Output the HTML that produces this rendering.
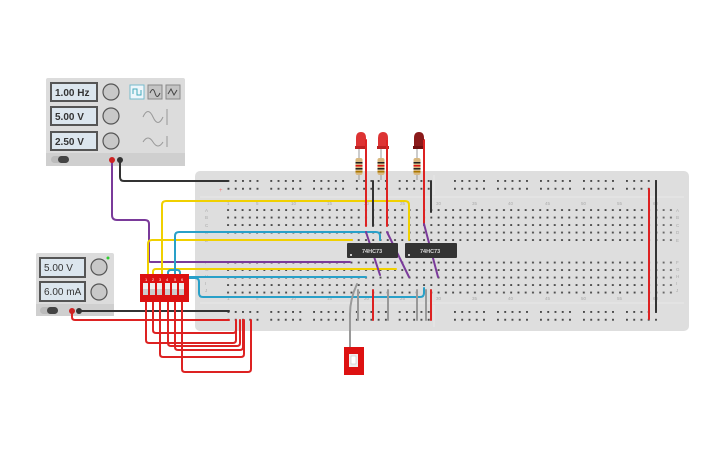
<!DOCTYPE html>
<html><head><meta charset="utf-8"><style>
html,body{margin:0;padding:0;background:#fff;width:725px;height:453px;overflow:hidden}
svg{display:block}
text{font-family:"Liberation Sans",sans-serif}
</style></head><body>
<svg width="725" height="453" viewBox="0 0 725 453" xmlns="http://www.w3.org/2000/svg">
<defs>
<pattern id="hp" x="226.5" y="208.5" width="7.26" height="7.5" patternUnits="userSpaceOnUse"><rect x="0.6" y="0.6" width="1.9" height="1.9" fill="#4a4a4a"/></pattern>
<g id="grp" fill="#4a4a4a"><rect x="0" y="0" width="1.9" height="1.9"/><rect x="7.26" y="0" width="1.9" height="1.9"/><rect x="14.52" y="0" width="1.9" height="1.9"/><rect x="21.78" y="0" width="1.9" height="1.9"/><rect x="29.04" y="0" width="1.9" height="1.9"/>
<rect x="0" y="7.8" width="1.9" height="1.9"/><rect x="7.26" y="7.8" width="1.9" height="1.9"/><rect x="14.52" y="7.8" width="1.9" height="1.9"/><rect x="21.78" y="7.8" width="1.9" height="1.9"/><rect x="29.04" y="7.8" width="1.9" height="1.9"/></g>
</defs>

<!-- breadboard -->
<rect x="195" y="171" width="494" height="160" rx="5" fill="#dedede"/>
<line x1="200" y1="197" x2="684" y2="197" stroke="#e8e8e8"/>
<line x1="200" y1="303" x2="684" y2="303" stroke="#e8e8e8"/>
<line x1="434" y1="175" x2="434" y2="195" stroke="#e8e8e8"/>
<line x1="434" y1="305" x2="434" y2="327" stroke="#e8e8e8"/>
<use href="#grp" x="227.5" y="180"/><use href="#grp" x="270.3" y="180"/><use href="#grp" x="313.1" y="180"/><use href="#grp" x="355.9" y="180"/><use href="#grp" x="398.7" y="180"/>
<use href="#grp" x="454" y="180"/><use href="#grp" x="497" y="180"/><use href="#grp" x="540" y="180"/><use href="#grp" x="583" y="180"/><use href="#grp" x="626" y="180"/>
<use href="#grp" x="227.5" y="311"/><use href="#grp" x="270.3" y="311"/><use href="#grp" x="313.1" y="311"/><use href="#grp" x="355.9" y="311"/><use href="#grp" x="398.7" y="311"/>
<use href="#grp" x="454" y="311"/><use href="#grp" x="497" y="311"/><use href="#grp" x="540" y="311"/><use href="#grp" x="583" y="311"/><use href="#grp" x="626" y="311"/>
<rect x="226" y="208" width="433" height="37" fill="url(#hp)"/>
<rect x="226" y="260" width="433" height="37" fill="url(#hp)"/>
<rect x="662" y="208" width="12" height="37" fill="url(#hp)" opacity="0.8"/>
<rect x="662" y="260" width="12" height="37" fill="url(#hp)" opacity="0.8"/>
<g font-size="4.5" fill="#aaa">
<text x="227" y="205">1</text><text x="256" y="205">5</text><text x="291" y="205">10</text><text x="327" y="205">15</text><text x="364" y="205">20</text><text x="400" y="205">25</text><text x="436" y="205">30</text><text x="472" y="205">35</text><text x="508" y="205">40</text><text x="545" y="205">45</text><text x="581" y="205">50</text><text x="617" y="205">55</text><text x="653" y="205">60</text>
<text x="227" y="300">1</text><text x="256" y="300">5</text><text x="291" y="300">10</text><text x="327" y="300">15</text><text x="364" y="300">20</text><text x="400" y="300">25</text><text x="436" y="300">30</text><text x="472" y="300">35</text><text x="508" y="300">40</text><text x="545" y="300">45</text><text x="581" y="300">50</text><text x="617" y="300">55</text><text x="653" y="300">60</text>
<text x="205" y="212">A</text><text x="205" y="219">B</text><text x="205" y="227">C</text><text x="205" y="234">D</text><text x="205" y="242">E</text>
<text x="205" y="264">F</text><text x="205" y="271">G</text><text x="205" y="278">H</text><text x="205" y="285">I</text><text x="205" y="292">J</text>
<text x="676" y="212">A</text><text x="676" y="219">B</text><text x="676" y="227">C</text><text x="676" y="234">D</text><text x="676" y="242">E</text>
<text x="676" y="264">F</text><text x="676" y="271">G</text><text x="676" y="278">H</text><text x="676" y="285">I</text><text x="676" y="292">J</text>
</g>
<text x="219" y="192" font-size="6" fill="#f08080">+</text>

<!-- function generator -->
<rect x="46" y="78" width="139" height="88" rx="2" fill="#dcdcdc"/>
<rect x="46" y="153" width="139" height="13" fill="#cfcfcf"/>
<g fill="#dce6ee" stroke="#555" stroke-width="2">
<rect x="51" y="83" width="46" height="18"/><rect x="51" y="107" width="46" height="18"/><rect x="51" y="132" width="46" height="18"/></g>
<g font-size="10" font-weight="bold" fill="#333"><text x="55" y="96">1.00 Hz</text><text x="55" y="120">5.00 V</text><text x="55" y="145">2.50 V</text></g>
<g fill="#c8c8c8" stroke="#555" stroke-width="1.2"><circle cx="111" cy="92" r="8"/><circle cx="111" cy="116" r="8"/><circle cx="111" cy="141" r="8"/></g>
<rect x="130" y="85" width="14" height="14" fill="#eef6fb" stroke="#7bc" stroke-width="1"/>
<rect x="148" y="85" width="14" height="14" fill="#c4c4c4" stroke="#888"/>
<rect x="166" y="85" width="14" height="14" fill="#c4c4c4" stroke="#888"/>
<path d="M133 94v-5h4v6h4v-5" stroke="#4ab" fill="none"/>
<path d="M150 93q3-7 5 0t5 0" stroke="#444" fill="none"/>
<path d="M168 94l3-5 3 6 3-5" stroke="#444" fill="none"/>
<path d="M143 117q5-11 10 0t10 0M167 109v16" stroke="#999" fill="none"/>
<path d="M143 142q5-8 10 0t10 0M167 136v11" stroke="#999" fill="none"/>
<rect x="51" y="156" width="18" height="7" rx="3.5" fill="#bbb"/><rect x="58" y="156" width="11" height="7" rx="3.5" fill="#444"/>

<!-- power supply -->
<rect x="36" y="253" width="78" height="63" rx="2" fill="#dcdcdc"/>
<rect x="36" y="304" width="78" height="12" fill="#cfcfcf"/>
<g fill="#dce6ee" stroke="#555" stroke-width="2"><rect x="40" y="258" width="45" height="19"/><rect x="40" y="282" width="45" height="19"/></g>
<g font-size="10" fill="#333"><text x="44" y="271">5.00 V</text><text x="44" y="295">6.00 mA</text></g>
<g fill="#c8c8c8" stroke="#555" stroke-width="1.2"><circle cx="99" cy="267" r="8"/><circle cx="99" cy="292" r="8"/></g>
<circle cx="108" cy="258" r="1.5" fill="#3c3"/>
<rect x="40" y="307" width="18" height="7" rx="3.5" fill="#bbb"/><rect x="47" y="307" width="11" height="7" rx="3.5" fill="#444"/>

<!-- wires -->
<g fill="none" stroke-width="2" stroke-linejoin="round" stroke-linecap="round">
<path d="M120 160v17q0 4 4 4h104" stroke="#333"/>
<path d="M112 160v55q0 5 5 5h28q4 0 4 4v37q0 1 2 1h199" stroke="#7a3a9a"/>
<path d="M79 311h150" stroke="#333"/>
<path d="M72 311v6q0 3 3 3h154" stroke="#d22"/>
<path d="M162 275v-70q0-4 4-4h239q4 0 4 4v35" stroke="#f0d000"/>
<path d="M148 275v-31q0-4 4-4h200" stroke="#f0d000"/>
<path d="M153 275v-3q0-3 3-3h240" stroke="#f0d000"/>
<path d="M175 275v-39q0-4 4-4h197q4 0 4 4v4" stroke="#29a0c8"/>
<path d="M168 275v-2q0-3 3-3h6q3 0 3 3v4h186" stroke="#29a0c8"/>
<path d="M187 278h8q4 0 4 4v11q0 4 4 4h217q4 0 4-4v-5" stroke="#29a0c8"/>
<path d="M146 300v40q0 3 3 3h84q3 0 3-3v-20" stroke="#d22"/>
<path d="M153 300v30q0 3 3 3h77q3 0 3-3" stroke="#d22"/>
<path d="M160 300v54q0 3 3 3h78q3 0 3-3v-34" stroke="#d22"/>
<path d="M168 300v43q0 3 3 3h66q3 0 3-3v-23" stroke="#d22"/>
<path d="M175 300v47q0 3 3 3h62q3 0 3-3v-27" stroke="#d22"/>
<path d="M182 300v69q0 3 3 3h63q3 0 3-3v-49" stroke="#d22"/>
<path d="M366 140v86M387 140v86M424 140v84" stroke="#d22"/>
<path d="M373 181v45M431 181v31" stroke="#333"/>
<path d="M366 232l14 43M387 232l22 45M424 224l14 53" stroke="#7a3a9a"/>
<path d="M357 284q-7 15-7 30v40" stroke="#999"/>
<path d="M358 290v30M388 290v30M417 290v30M426 290v30" stroke="#999"/>
<path d="M373 290v30M431 290v30" stroke="#d22"/>
<path d="M649 189v130" stroke="#d22"/><path d="M656 181v131" stroke="#333"/>
</g>
<circle cx="112" cy="160" r="3" fill="#c22"/><circle cx="120" cy="160" r="3" fill="#333"/>
<circle cx="72" cy="311" r="3" fill="#c22"/><circle cx="79" cy="311" r="3" fill="#333"/>

<!-- ICs -->
<rect x="347" y="243" width="51" height="15" rx="1" fill="#333"/>
<rect x="405" y="243" width="52" height="15" rx="1" fill="#333"/>
<g font-size="5.5" fill="#ddd" font-weight="bold"><text x="362" y="253">74HC73</text><text x="420" y="253">74HC73</text></g>
<circle cx="351" cy="255" r="1" fill="#fff"/><circle cx="409" cy="255" r="1" fill="#fff"/>

<!-- DIP switch -->
<rect x="140" y="274" width="49" height="28" fill="#dd1111"/>
<g fill="#eee"><rect x="143" y="283" width="5" height="12"/><rect x="150" y="283" width="5" height="12"/><rect x="157" y="283" width="5" height="12"/><rect x="165" y="283" width="5" height="12"/><rect x="172" y="283" width="5" height="12"/><rect x="179" y="283" width="5" height="12"/></g>
<g fill="#ccc"><rect x="143" y="289" width="5" height="6"/><rect x="150" y="289" width="5" height="6"/><rect x="157" y="289" width="5" height="6"/><rect x="165" y="289" width="5" height="6"/><rect x="172" y="289" width="5" height="6"/><rect x="179" y="289" width="5" height="6"/></g>
<g font-size="4" fill="#fff"><text x="145" y="281">1</text><text x="152" y="281">2</text><text x="159" y="281">3</text><text x="166" y="281">4</text><text x="174" y="281">5</text><text x="181" y="281">6</text></g>

<!-- slide switch -->
<rect x="344" y="347" width="20" height="28" fill="#dd1111"/>
<rect x="349" y="354" width="9" height="13" fill="#eee"/><rect x="351" y="356" width="5" height="8" fill="#fff" stroke="#bbb" stroke-width="0.5"/>

<!-- LEDs and resistors -->
<g>
<path d="M356 148v-10q0-6 5-6t5 6v10z" fill="#d33"/><rect x="355" y="146" width="12" height="3" fill="#b22"/>
<path d="M378 148v-10q0-6 5-6t5 6v10z" fill="#d33"/><rect x="377" y="146" width="12" height="3" fill="#b22"/>
<path d="M414 148v-10q0-6 5-6t5 6v10z" fill="#8b1a1a"/><rect x="413" y="146" width="12" height="3" fill="#701010"/>
<g stroke="#999"><line x1="359" y1="149" x2="359" y2="180"/><line x1="381" y1="149" x2="381" y2="180"/><line x1="417" y1="149" x2="417" y2="180"/></g>
<g><rect x="355.5" y="158" width="7" height="17" rx="2" fill="#d8b880"/><rect x="355.5" y="162" width="7" height="1.5" fill="#222"/><rect x="355.5" y="165" width="7" height="1.5" fill="#d11"/><rect x="355.5" y="168" width="7" height="1.5" fill="#222"/><rect x="355.5" y="171" width="7" height="1.5" fill="#a70"/></g>
<g><rect x="377.5" y="158" width="7" height="17" rx="2" fill="#d8b880"/><rect x="377.5" y="162" width="7" height="1.5" fill="#222"/><rect x="377.5" y="165" width="7" height="1.5" fill="#d11"/><rect x="377.5" y="168" width="7" height="1.5" fill="#222"/><rect x="377.5" y="171" width="7" height="1.5" fill="#a70"/></g>
<g><rect x="413.5" y="158" width="7" height="17" rx="2" fill="#d8b880"/><rect x="413.5" y="162" width="7" height="1.5" fill="#222"/><rect x="413.5" y="165" width="7" height="1.5" fill="#d11"/><rect x="413.5" y="168" width="7" height="1.5" fill="#222"/><rect x="413.5" y="171" width="7" height="1.5" fill="#a70"/></g>
</g>
<g stroke="#d22" stroke-width="2"><line x1="366" y1="140" x2="366" y2="150"/><line x1="387" y1="140" x2="387" y2="150"/><line x1="424" y1="140" x2="424" y2="150"/></g>
</svg>
</body></html>
